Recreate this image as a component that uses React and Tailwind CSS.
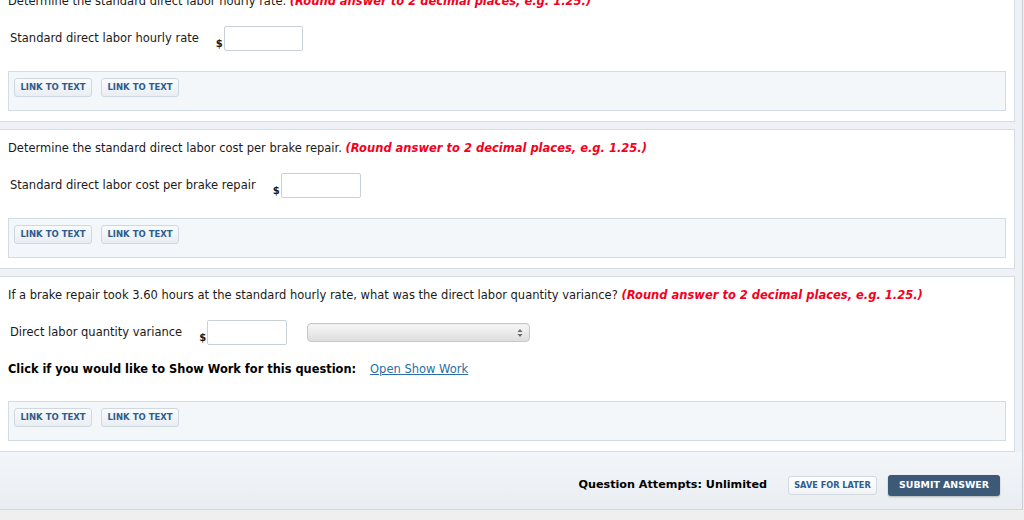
import { useState } from "react";

const font = { fontFamily: '"DejaVu Sans", Verdana, sans-serif' };

const LinkButtons = () => (
  <div className="mx-2 flex h-[40px] gap-[9px] border border-[#d3dbe4] bg-[#f4f7fa] px-[5px] pt-[6px]">
    {["LINK TO TEXT", "LINK TO TEXT"].map((t, i) => (
      <button
        key={i}
        className="h-[19px] w-[78px] rounded-[3px] border border-[#cfd7df] bg-gradient-to-b from-[#f9fbfc] to-[#e9eef3] text-[8.5px] font-bold text-[#2d5c8e]"
      >
        {t}
      </button>
    ))}
  </div>
);

const Question = ({ text, children, extra, first }) => (
  <div
    className={`mr-[7px] border border-l-0 border-[#d5dce4] bg-white pb-[10px] pt-[11px] ${first ? "-mt-[18px]" : ""}`}
  >
    <p className="h-[14px] pl-[8px] leading-[14px]">
      {text}{" "}
      <span className="font-bold italic text-[#f5001c]">
        (Round answer to 2 decimal places, e.g. 1.25.)
      </span>
    </p>
    <div className="mt-[18px] flex h-[25px] items-center pl-[10px]">{children}</div>
    {extra}
    <div className={extra ? "mt-[25px]" : "mt-[20px]"}>
      <LinkButtons />
    </div>
  </div>
);

const Answer = ({ label, width = 79 }) => {
  const [v, setV] = useState("");
  return (
    <>
      <span>{label}</span>
      <span className="ml-[17px] self-end pb-[2px] text-[10px] font-bold leading-none">$</span>
      <input
        value={v}
        onChange={(e) => setV(e.target.value)}
        style={{ width }}
        className="ml-[1px] h-[25px] rounded-[2px] border border-[#c9d0d6] bg-white px-1 outline-none"
      />
    </>
  );
};

export default function App() {
  return (
    <div style={font} className="h-[520px] w-[1024px] overflow-hidden bg-[#efefef] text-[11.5px] text-[#1a1a1a]">
      <div className="w-[1023px] border-r border-[#c9ced4] bg-[#eef2f6]">
        <div className="flex flex-col gap-[7px]">
          <Question first text="Determine the standard direct labor hourly rate.">
            <Answer label="Standard direct labor hourly rate" width={79} />
          </Question>
          <Question text="Determine the standard direct labor cost per brake repair.">
            <Answer label="Standard direct labor cost per brake repair" width={80} />
          </Question>
          <Question
            text="If a brake repair took 3.60 hours at the standard hourly rate, what was the direct labor quantity variance?"
            extra={
              <p className="mt-[17px] h-[14px] pl-[8px] leading-[14px]">
                <span className="text-[11.4px] font-bold text-black">Click if you would like to Show Work for this question:</span>
                <a href="#" className="ml-[14px] text-[#2a6ea6] underline">
                  Open Show Work
                </a>
              </p>
            }
          >
            <Answer label="Direct labor quantity variance" width={80} />
            <div className="ml-[20px] flex h-[19px] w-[223px] items-center justify-end rounded-[4px] border border-[#c4c8cc] bg-gradient-to-b from-[#f7f7f7] to-[#dedede] pr-[6px] shadow-[inset_0_1px_1px_rgba(0,0,0,0.05)]">
              <svg width="6" height="10" viewBox="0 0 6 10">
                <path d="M3 1 L5.5 4 H0.5 Z M3 9 L5.5 6 H0.5 Z" fill="#6b6b6b" />
              </svg>
            </div>
          </Question>
        </div>
        <div className="flex h-[58px] items-center justify-end border-b border-[#d3d8de] bg-gradient-to-b from-[#f3f6f9] to-[#e9edf1] pr-[22px] pt-[10px]">
          <span className="mr-[21px] text-[11.2px] font-bold text-black">Question Attempts: Unlimited</span>
          <button className="mr-[11px] h-[19px] w-[89px] rounded-[3px] border border-[#d2d9e0] bg-gradient-to-b from-[#ffffff] to-[#f0f3f6] text-[8.2px] font-bold text-[#2d5c8e]">
            SAVE FOR LATER
          </button>
          <button className="h-[21px] w-[112px] rounded-[3px] bg-[#3c5a78] text-[9.4px] font-bold text-white shadow-[0_1px_2px_rgba(0,0,0,0.25)]">
            SUBMIT ANSWER
          </button>
        </div>
      </div>
    </div>
  );
}
